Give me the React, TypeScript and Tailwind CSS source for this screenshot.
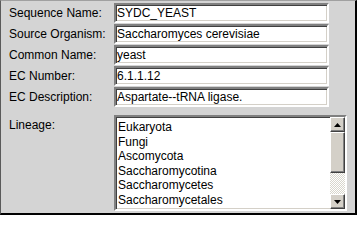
import React from "react";

const fields = [
  { label: "Sequence Name:", value: "SYDC_YEAST" },
  { label: "Source Organism:", value: "Saccharomyces cerevisiae" },
  { label: "Common Name:", value: "yeast" },
  { label: "EC Number:", value: "6.1.1.12" },
  { label: "EC Description:", value: "Aspartate--tRNA ligase." },
];

const lineage = [
  "Eukaryota",
  "Fungi",
  "Ascomycota",
  "Saccharomycotina",
  "Saccharomycetes",
  "Saccharomycetales",
];

const sunken =
  "border-2 border-t-[#808080] border-l-[#808080] border-b-white border-r-white shadow-[inset_1px_1px_0_#404040,inset_-1px_-1px_0_#d4d0c8] bg-white";

const raised =
  "bg-[#d4d0c8] border border-t-white border-l-white border-b-[#404040] border-r-[#404040] shadow-[inset_-1px_-1px_0_#808080]";

function ScrollButton({ up }: { up?: boolean }) {
  return (
    <div className={`${raised} h-[15px] flex items-center justify-center`}>
      <svg width="7" height="4" viewBox="0 0 7 4">
        {up ? <polygon points="3.5,0 7,4 0,4" fill="#000" /> : <polygon points="0,0 7,0 3.5,4" fill="#000" />}
      </svg>
    </div>
  );
}

export default function App() {
  return (
    <div
      className="w-[357px] h-[215px] bg-[#d4d4d4] border-l border-t border-l-[#5a5a5a] border-t-[#a0a0a0] border-r-2 border-b-2 border-r-black border-b-black pl-[8px] pt-[2px] text-[12px] text-black flex flex-col"
      style={{ fontFamily: '"Liberation Sans", Arial, sans-serif' }}
    >
      <div className="flex flex-col gap-[1px]">
        {fields.map((f) => (
          <div key={f.label} className="flex items-center h-[20px]">
            <span className="w-[105px] shrink-0">{f.label}</span>
            <div className={`${sunken} w-[215px] h-[20px] flex items-center pl-[1px] whitespace-nowrap overflow-hidden`}>
              {f.value}
            </div>
          </div>
        ))}
      </div>

      <div className="flex mt-[8px]">
        <span className="w-[105px] shrink-0 pt-[1px]">Lineage:</span>
        <div className={`${sunken} w-[233px] h-[96px] flex`}>
          <ul className="flex-1 pl-[2px] pt-[3px] leading-[14.5px]">
            {lineage.map((l) => (
              <li key={l}>{l}</li>
            ))}
          </ul>
          <div className="w-[15px] flex flex-col">
            <ScrollButton up />
            <div className={`${raised} h-[41px]`} />
            <div className="flex-1 bg-[repeating-conic-gradient(#ffffff_0%_25%,#d8d6cc_0%_50%)] bg-[length:2px_2px]" />
            <ScrollButton />
          </div>
        </div>
      </div>
    </div>
  );
}
